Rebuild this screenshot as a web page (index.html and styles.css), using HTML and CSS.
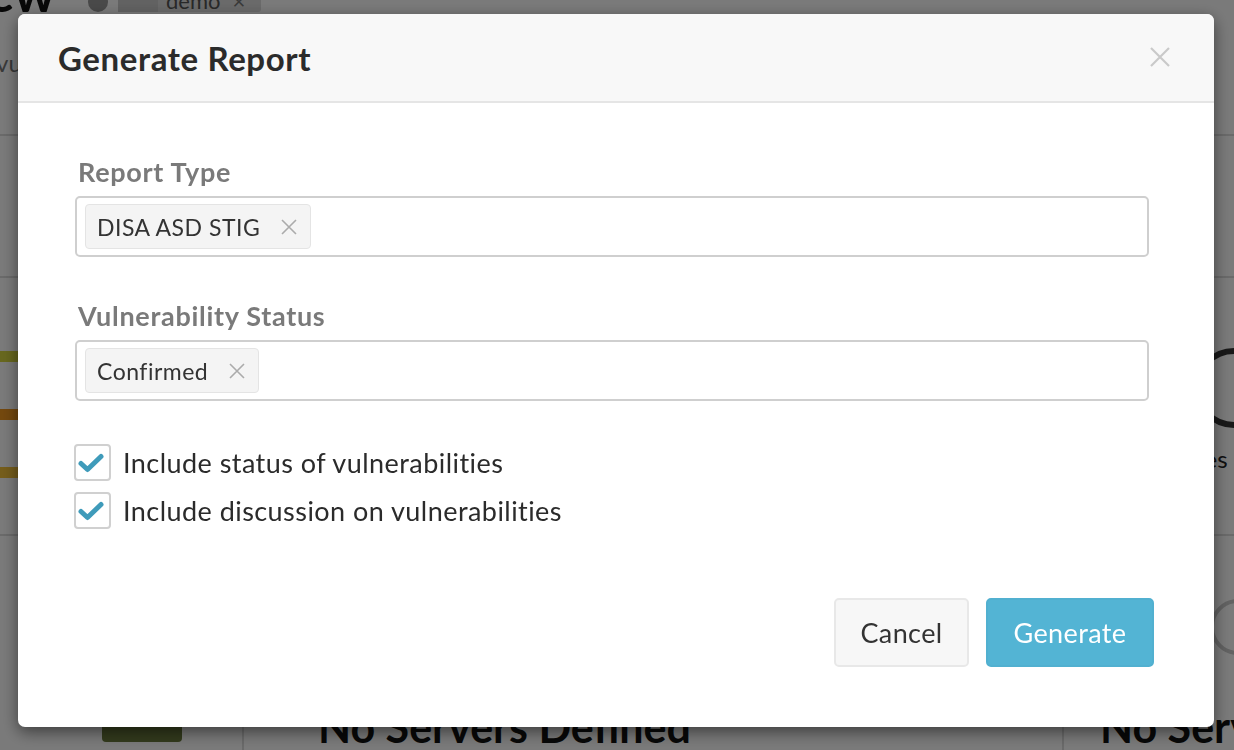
FILE: index.html
```html
<!DOCTYPE html>
<html lang="en">
<head>
<meta charset="utf-8">
<title>Generate Report</title>
<link rel="stylesheet" href="styles.css">
</head>
<body>
<div class="page">
  <header class="page-head">
    <div class="title-row">
      <h1 class="page-title">Overview</h1>
      <span class="status-dot"></span>
      <span class="env-tag"><span class="env-arrow"></span>demo <span class="env-x">×</span></span>
    </div>
    <p class="page-sub">vulnerabilities overview</p>
  </header>
  <section class="band band-top"></section>
  <section class="band band-mid">
    <div class="bars">
      <span class="bar bar-olive"></span>
      <span class="bar bar-brown"></span>
      <span class="bar bar-amber"></span>
    </div>
    <div class="mid-right">
      <span class="ring"></span>
      <span class="dash"></span>
      <span class="mid-label">Issues</span>
    </div>
  </section>
  <section class="band band-bottom">
    <div class="col col-a"><span class="green-btn"></span></div>
    <div class="col col-b"><h2 class="empty-title">No Servers Defined</h2></div>
    <div class="col col-c"><span class="empty-ring"></span><h2 class="empty-title">No Servers Defined</h2></div>
  </section>
</div>

<div class="overlay">
  <div class="modal">
    <div class="modal-head">
      <h3 class="modal-title">Generate Report</h3>
      <button class="close" aria-label="Close">
        <svg width="20" height="20" viewBox="0 0 20 20"><path d="M1 1L19 19M19 1L1 19" stroke="#c9c9c9" stroke-width="2.2" fill="none"/></svg>
      </button>
    </div>
    <div class="modal-body">
      <div class="field">
        <label class="field-label">Report Type</label>
        <div class="multi">
          <span class="chip">DISA ASD STIG <svg class="chip-x" width="16" height="16" viewBox="0 0 16 16"><path d="M1 1L15 15M15 1L1 15" stroke="#ababab" stroke-width="1.6" fill="none"/></svg></span>
        </div>
      </div>
      <div class="field">
        <label class="field-label">Vulnerability Status</label>
        <div class="multi">
          <span class="chip">Confirmed <svg class="chip-x" width="16" height="16" viewBox="0 0 16 16"><path d="M1 1L15 15M15 1L1 15" stroke="#ababab" stroke-width="1.6" fill="none"/></svg></span>
        </div>
      </div>
      <div class="checks">
        <label class="check">
          <span class="box"><svg width="26" height="20" viewBox="0 0 26 20"><path d="M3 10.5L9.5 16.5L23 3.5" stroke="#3f9bba" stroke-width="5" stroke-linecap="round" stroke-linejoin="round" fill="none"/></svg></span>
          Include status of vulnerabilities
        </label>
        <label class="check">
          <span class="box"><svg width="26" height="20" viewBox="0 0 26 20"><path d="M3 10.5L9.5 16.5L23 3.5" stroke="#3f9bba" stroke-width="5" stroke-linecap="round" stroke-linejoin="round" fill="none"/></svg></span>
          Include discussion on vulnerabilities
        </label>
      </div>
    </div>
    <div class="modal-foot">
      <button class="btn btn-default">Cancel</button>
      <button class="btn btn-primary">Generate</button>
    </div>
  </div>
</div>
</body>
</html>
```

FILE: styles.css
```css
* { box-sizing: border-box; }
html, body { margin: 0; padding: 0; }
body {
  width: 1234px;
  height: 750px;
  overflow: hidden;
  font-family: Lato, "Open Sans", "Liberation Sans", sans-serif;
  background: #fff;
  color: #333;
}

/* ---------- underlying page ---------- */
.page { width: 1234px; height: 750px; overflow: hidden; }
.page-head { height: 136px; border-bottom: 2px solid #ddd; padding: 0; }
.title-row { display: flex; align-items: flex-start; height: 14px; overflow: visible; }
.page-title {
  margin: -34px 0 0 -170px;
  font-size: 52px;
  font-weight: 700;
  line-height: 1;
  color: #111;
  width: 240px;
  flex-shrink: 0;
}
.status-dot {
  width: 20px; height: 20px; border-radius: 50%;
  background: #999; margin: -8px 0 0 18px; flex-shrink: 0;
}
.env-tag {
  display: flex; align-items: center;
  height: 24px; margin: -12px 0 0 10px;
  padding: 0 16px 0 0; background: #ddd; border-radius: 3px;
  font-size: 22px; color: #555;
}
.env-arrow { width: 40px; height: 24px; background: #ccc; margin-right: 8px; }
.env-x { margin-left: 12px; color: #777; }
.page-sub { margin: 34px 0 0 -4px; font-size: 24px; color: #777; }

.band-top { height: 142px; border-bottom: 2px solid #ddd; }
.band-mid { height: 258px; border-bottom: 2px solid #ddd; display: flex; justify-content: space-between; }
.bars { display: flex; flex-direction: column; padding-top: 73px; gap: 47px; width: 200px; }
.bar { display: block; height: 11px; width: 200px; }
.bar-olive { background: #d8d840; }
.bar-brown { background: #f0961f; }
.bar-amber { background: #f4c23a; }
.mid-right { width: 60px; display: flex; flex-direction: column; padding-top: 70px; }
.ring { width: 80px; height: 80px; border: 6px solid #333; border-radius: 50%; margin-left: 20px; }
.dash { width: 12px; height: 6px; background: #333; }
.mid-label { font-size: 24px; margin: 10px 0 0 -10px; color: #222; }

.band-bottom { display: flex; height: 214px; }
.col { border-right: 2px solid #ddd; flex-shrink: 0; }
.col-a { width: 244px; display: flex; align-items: flex-end; padding-left: 102px; }
.green-btn { width: 80px; height: 24px; background: #6a7a3c; border-radius: 4px; margin-bottom: 8px; }
.col-b { width: 820px; display: flex; flex-direction: column; justify-content: flex-end; padding-left: 74px; overflow: hidden; }
.col-c { flex: 1; flex-shrink: 1; border-right: 0; display: flex; flex-direction: column; justify-content: flex-end; padding-left: 36px; overflow: hidden; }
.empty-ring { width: 56px; height: 56px; border: 4px solid #ccc; border-radius: 50%; margin: 0 0 50px 110px; flex-shrink: 0; }
.empty-title { margin: 0 0 2px; font-size: 43px; line-height: 1; font-weight: 700; color: #111; white-space: nowrap; }

/* ---------- overlay + modal ---------- */
.overlay {
  position: fixed;
  inset: 0;
  background: rgba(0, 0, 0, 0.52);
}
.modal {
  width: 1196px;
  height: 713px;
  margin: 14px 0 0 18px;
  background: #fff;
  border-radius: 7px;
  box-shadow: 0 5px 16px rgba(0, 0, 0, 0.5);
  display: flex;
  flex-direction: column;
  overflow: hidden;
}
.modal-head {
  height: 89px;
  flex-shrink: 0;
  background: #f8f8f8;
  border-bottom: 2px solid #e5e5e5;
  display: flex;
  align-items: center;
  justify-content: space-between;
  padding: 0 44px 0 40px;
}
.modal-title {
  margin: 0;
  font-size: 33px;
  font-weight: 700;
  color: #2b2b2b;
  letter-spacing: 0.6px;
}
.close {
  border: 0; background: none; padding: 0;
  width: 20px; height: 20px; display: flex;
  margin-top: -2px;
}

.modal-body {
  padding: 53px 65px 0 57px;
  flex: 1;
}
.field { margin-bottom: 43px; }
.field-label {
  display: block;
  font-size: 27px;
  font-weight: 700;
  color: #7a7a7a;
  letter-spacing: 0.7px;
  margin: 0 0 8px 3px;
  line-height: 32px;
}
.multi {
  height: 61px;
  border: 2px solid #cfcfcf;
  border-radius: 5px;
  padding: 6px 8px;
  display: flex;
  align-items: center;
}
.chip {
  display: inline-flex;
  align-items: center;
  height: 45px;
  padding: 0 13px 0 11px;
  background: #f4f4f4;
  border: 1px solid #e4e4e4;
  border-radius: 4px;
  font-size: 23px;
  letter-spacing: 0.5px;
  color: #333;
}
.chip-x { margin-left: 21px; }

.checks { display: flex; flex-direction: column; gap: 11px; margin-top: 6px; }
.check {
  display: flex;
  align-items: center;
  font-size: 27px;
  letter-spacing: 0.45px;
  color: #2b2b2b;
  height: 37px;
}
.box {
  width: 37px; height: 37px;
  border: 2px solid #d0d0d0;
  border-radius: 4px;
  margin: 0 12px 0 -1px;
  display: flex; align-items: center; justify-content: center;
  background: #fff;
}
.box svg { margin-left: -4px; }

.modal-foot {
  display: flex;
  justify-content: flex-end;
  gap: 17px;
  padding: 0 60px 60px 0;
}
.btn {
  height: 69px;
  border-radius: 5px;
  font-family: Lato, "Open Sans", "Liberation Sans", sans-serif;
  font-size: 27px;
  letter-spacing: 0.4px;
  padding: 0;
}
.btn-default { width: 135px; background: #f7f7f7; border: 2px solid #e8e8e8; color: #333; }
.btn-primary { width: 168px; background: #53b4d4; border: 2px solid #51b0d0; color: #fff; }
```
